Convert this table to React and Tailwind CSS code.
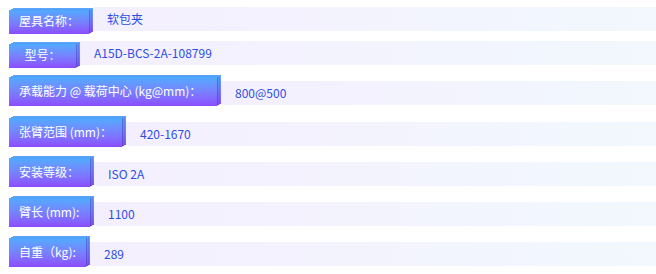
const rows = [
  { label: "屋具名称：", value: "软包夹", tall: false, w: "w-[80px]", mt: "mt-[7px]" },
  { label: "型号：", value: "A15D-BCS-2A-108799", tall: false, w: "w-[67px] justify-center", mt: "mt-[7px]" },
  { label: "承载能力 @ 载荷中心 (kg@mm)：", value: "800@500", tall: true, w: "w-[208px]", mt: "mt-[9px]" },
  { label: "张臂范围 (mm)：", value: "420-1670", tall: true, w: "w-[113px]", mt: "mt-[12px]" },
  { label: "安装等级：", value: "ISO 2A", tall: true, w: "w-[81px]", mt: "mt-[11px]" },
  { label: "臂长 (mm):", value: "1100", tall: true, w: "w-[81px]", mt: "mt-[11px]" },
  { label: "自重（kg):", value: "289", tall: true, w: "w-[77px]", mt: "mt-[11px]" },
];

function Label({ text, tall, w }) {
  const h = tall ? "h-[29px]" : "h-6";
  return (
    <div className={`relative isolate shrink-0 ${tall ? "" : "mt-[3px]"}`}>
      {/* stacked layers behind the tag */}
      <div className={`absolute left-0 top-0 w-full ${h} translate-x-[4px] -translate-y-[2px] bg-linear-to-b from-[#5aa6fb] to-[#8256f6]`} />
      <div className={`absolute left-0 top-0 w-full ${h} translate-x-[2px] -translate-y-[1px] bg-linear-to-b from-[#4f9ff8] to-[#7a4cf3] shadow-[1px_0_0_rgba(60,60,200,0.25)]`} />
      <div
        className={`relative ${h} ${w} px-[10px] flex items-center text-white text-[12px] whitespace-nowrap bg-linear-to-b from-[#4dabff] to-[#8b4bff] shadow-[1px_0_0_rgba(50,50,170,0.35)]`}
      >
        <span className="-mt-[2px]">{text}</span>
      </div>
    </div>
  );
}

export default function App() {
  return (
    <div
      className="w-[656px] h-[274px] bg-white overflow-hidden"
      style={{ fontFamily: '"Noto Sans CJK SC", "Noto Sans", sans-serif' }}
    >
      <div className="flex flex-col pl-[9px]">
        {rows.map((r, i) => (
          <div key={i} className={`flex items-start ${r.mt}`}>
            <Label text={r.label} tall={r.tall} w={r.w} />
            <div
              className={`flex-1 ml-1 h-6 flex items-center pl-[14px] text-[12px] text-[#2c4ee6] bg-linear-to-r from-[#f4effe] to-[#f2f8fe] ${r.tall ? "mt-1" : ""}`}
            >
              {r.value}
            </div>
          </div>
        ))}
      </div>
    </div>
  );
}
